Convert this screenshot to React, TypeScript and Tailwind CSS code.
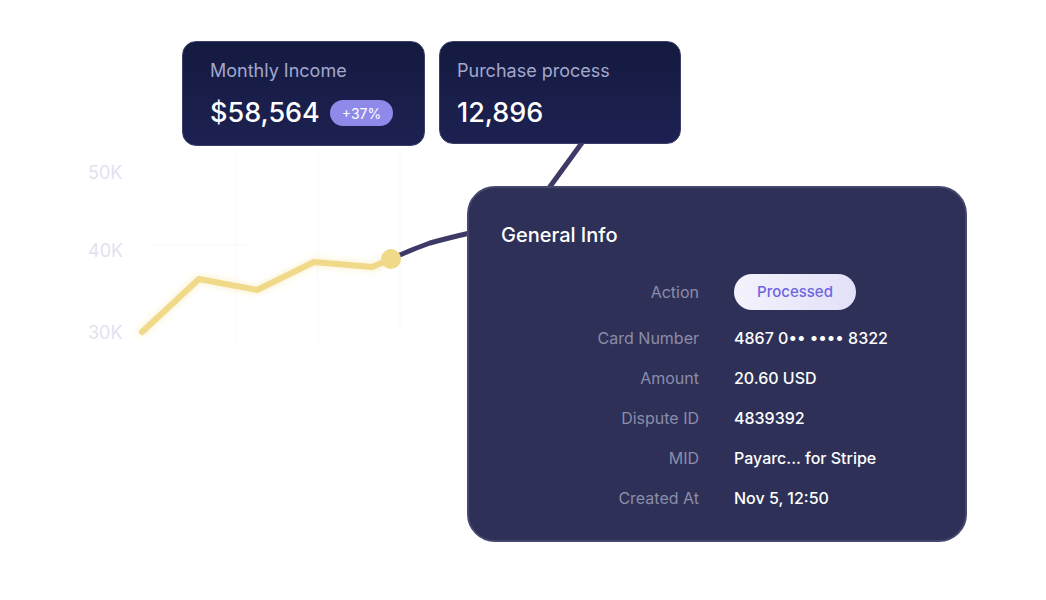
import React from 'react'

const rows = [
  { label: 'Card Number', value: '4867 0•• •••• 8322' },
  { label: 'Amount', value: '20.60 USD' },
  { label: 'Dispute ID', value: '4839392' },
  { label: 'MID', value: 'Payarc... for Stripe' },
  { label: 'Created At', value: 'Nov 5, 12:50' },
]

function Chart() {
  return (
    <svg className="absolute inset-0" width="1046" height="600" viewBox="0 0 1046 600">
      <defs>
        <filter id="glow" x="-20%" y="-50%" width="140%" height="200%">
          <feGaussianBlur stdDeviation="3" />
        </filter>
      </defs>
      {/* faint grid */}
      <g stroke="#f8f8fb" strokeWidth="1">
        <line x1="236" y1="150" x2="236" y2="340" />
        <line x1="318" y1="150" x2="318" y2="340" />
        <line x1="400" y1="150" x2="400" y2="330" />
        <line x1="150" y1="245" x2="250" y2="245" />
      </g>
      {/* connector lines */}
      <line x1="584" y1="140" x2="549" y2="188" stroke="#3d3a68" strokeWidth="5" />
      <path d="M391 259 Q410 250 430 243 Q448 238 470 233" fill="none" stroke="#3d3a68" strokeWidth="5" />
      {/* income line */}
      <polyline
        points="142,332 199,279 257,290 314,262 372,267 391,259"
        fill="none"
        stroke="#f3dc8c"
        strokeOpacity="0.35"
        strokeWidth="9"
        strokeLinejoin="round"
        strokeLinecap="round"
        filter="url(#glow)"
      />
      <polyline
        points="142,332 199,279 257,290 314,262 372,267 391,259"
        fill="none"
        stroke="#f1d98a"
        strokeWidth="6"
        strokeLinejoin="round"
        strokeLinecap="round"
      />
      <circle cx="391" cy="259" r="10" fill="#f1d98a" />
    </svg>
  )
}

export default function App() {
  return (
    <div
      className="relative w-[1046px] h-[600px] bg-white overflow-hidden"
      style={{ fontFamily: 'Inter, "Noto Sans", sans-serif' }}
    >
      <Chart />

      {/* y axis labels */}
      <div className="absolute left-[88px] top-[159px] text-[18px] text-[#e3e1f1]">50K</div>
      <div className="absolute left-[88px] top-[237px] text-[18px] text-[#e3e1f1]">40K</div>
      <div className="absolute left-[88px] top-[319px] text-[18px] text-[#e3e1f1]">30K</div>

      {/* Monthly Income */}
      <div className="absolute left-[182px] top-[41px] w-[243px] h-[105px] rounded-[14px] border border-[#3b3f68] bg-gradient-to-b from-[#151a40] to-[#1c2152] px-[27px] pt-[17px]">
        <div className="text-[18px] leading-[24px] text-[#a3a7cc]">Monthly Income</div>
        <div className="mt-[13px] flex items-center gap-[10px]">
          <span className="text-[27px] leading-[34px] font-medium text-white">$58,564</span>
          <span className="rounded-full bg-[#8f8ae9] px-[12px] h-[26px] flex items-center text-[14px] text-white">+37%</span>
        </div>
      </div>

      {/* Purchase process */}
      <div className="absolute left-[439px] top-[41px] w-[242px] h-[103px] rounded-[14px] border border-[#3b3f68] bg-gradient-to-b from-[#151a40] to-[#1c2152] px-[17px] pt-[17px]">
        <div className="text-[18px] leading-[24px] text-[#a3a7cc]">Purchase process</div>
        <div className="mt-[13px] text-[27px] leading-[34px] font-medium text-white">12,896</div>
      </div>

      {/* General Info */}
      <div className="absolute left-[467px] top-[186px] w-[500px] h-[356px] rounded-[28px] border-2 border-[#44476e] bg-[#2e3057] px-[32px] pt-[33px]">
        <div className="text-[20px] leading-[28px] font-medium text-white">General Info</div>
        <div className="mt-[25px] grid grid-cols-[198px_1fr] gap-x-[35px] items-center">
          <div className="text-right text-[16px] text-[#8b8da9]">Action</div>
          <div>
            <span className="inline-flex h-[36px] w-[122px] items-center justify-center rounded-full bg-gradient-to-r from-[#f3f2fc] to-[#e2e1f8] text-[15px] font-medium text-[#6e66e0]">
              Processed
            </span>
          </div>
        </div>
        <div className="mt-[16px] flex flex-col gap-[16px]">
          {rows.map((r) => (
            <div key={r.label} className="grid grid-cols-[198px_1fr] gap-x-[35px] items-center leading-[24px]">
              <div className="text-right text-[16px] text-[#8b8da9]">{r.label}</div>
              <div className="text-[16px] font-medium text-white">{r.value}</div>
            </div>
          ))}
        </div>
      </div>
    </div>
  )
}
